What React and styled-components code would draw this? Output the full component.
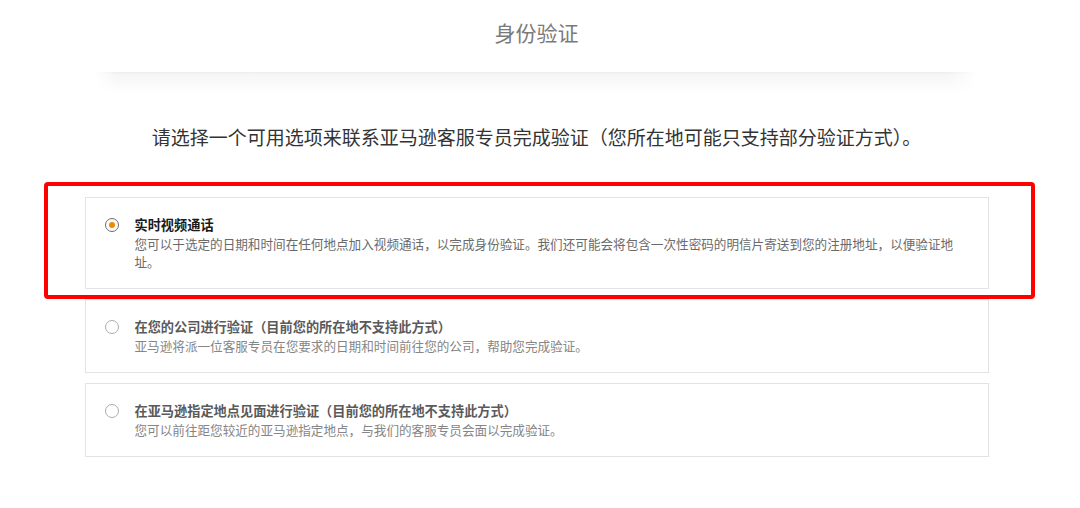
import React from "react";
import styled, { createGlobalStyle } from "styled-components";

const Global = createGlobalStyle`
  html, body { margin: 0; padding: 0; background: #fff; }
  body { font-family: "Noto Sans CJK SC", "Noto Sans", sans-serif; }
`;

const Page = styled.div`
  width: 1073px;
`;

const Header = styled.header`
  height: 72px;
  box-sizing: border-box;
  padding-top: 17px;
  text-align: center;
`;

const PageTitle = styled.h1`
  margin: 0;
  font-size: 21px;
  line-height: 30px;
  font-weight: 400;
  color: #7a7a7a;
`;

const Shade = styled.div`
  height: 22px;
  margin: 0 95px 0 95px;
  background: linear-gradient(to bottom, #ededed 0px, #f5f5f5 2px, #fafafa 12px, #ffffff 22px);
  -webkit-mask-image: linear-gradient(to right, transparent 0, #000 22px, #000 calc(100% - 30px), transparent 100%);
  mask-image: linear-gradient(to right, transparent 0, #000 22px, #000 calc(100% - 30px), transparent 100%);
`;

const Lead = styled.p`
  margin: 29px 0 0;
  text-align: center;
  font-size: 19px;
  line-height: 28px;
  color: #333;
`;

const List = styled.div`
  width: 904px;
  margin: 46px auto 0;
  display: flex;
  flex-direction: column;
  gap: 10px;
`;

const Card = styled.div`
  position: relative;
  box-sizing: border-box;
  border: 1px solid #e3e3e3;
  padding: 17px 30px 17px 19px;
  display: flex;
  align-items: flex-start;
  gap: 16px;
`;

const Highlight = styled.div`
  position: absolute;
  left: -42px;
  top: -16px;
  right: -47px;
  bottom: -11px;
  border: 4.5px solid #ff0000;
  border-radius: 4px;
  pointer-events: none;
`;

const Radio = styled.span`
  flex: none;
  width: 14px;
  height: 14px;
  margin-top: 3px;
  box-sizing: border-box;
  border-radius: 50%;
  border: 1.6px solid ${(p) => (p.$checked ? "#6b6b6b" : "#ababab")};
  background: #fff;
  display: flex;
  align-items: center;
  justify-content: center;
  &::after {
    content: "";
    display: ${(p) => (p.$checked ? "block" : "none")};
    width: 6px;
    height: 6px;
    border-radius: 50%;
    background: #f08a00;
  }
`;

const Body = styled.div`
  flex: 1;
  min-width: 0;
`;

const OptionTitle = styled.div`
  font-size: 13.2px;
  line-height: 20px;
  font-weight: 700;
  color: ${(p) => (p.$muted ? "#5a5a5a" : "#1a1a1a")};
`;

const Desc = styled.div`
  font-size: 12.6px;
  line-height: 18px;
  color: ${(p) => (p.$muted ? "#858585" : "#6a6a6a")};
`;

const options = [
  {
    title: "实时视频通话",
    desc: "您可以于选定的日期和时间在任何地点加入视频通话，以完成身份验证。我们还可能会将包含一次性密码的明信片寄送到您的注册地址，以便验证地址。",
    checked: true,
  },
  {
    title: "在您的公司进行验证（目前您的所在地不支持此方式）",
    desc: "亚马逊将派一位客服专员在您要求的日期和时间前往您的公司，帮助您完成验证。",
  },
  {
    title: "在亚马逊指定地点见面进行验证（目前您的所在地不支持此方式）",
    desc: "您可以前往距您较近的亚马逊指定地点，与我们的客服专员会面以完成验证。",
  },
];

export default function App() {
  return (
    <Page>
      <Global />
      <Header>
        <PageTitle>身份验证</PageTitle>
      </Header>
      <Shade />
      <Lead>请选择一个可用选项来联系亚马逊客服专员完成验证（您所在地可能只支持部分验证方式）。</Lead>
      <List>
        {options.map((o) => (
          <Card key={o.title}>
            <Radio $checked={o.checked} />
            <Body>
              <OptionTitle $muted={!o.checked}>{o.title}</OptionTitle>
              <Desc $muted={!o.checked}>{o.desc}</Desc>
            </Body>
            {o.checked && <Highlight />}
          </Card>
        ))}
      </List>
    </Page>
  );
}
